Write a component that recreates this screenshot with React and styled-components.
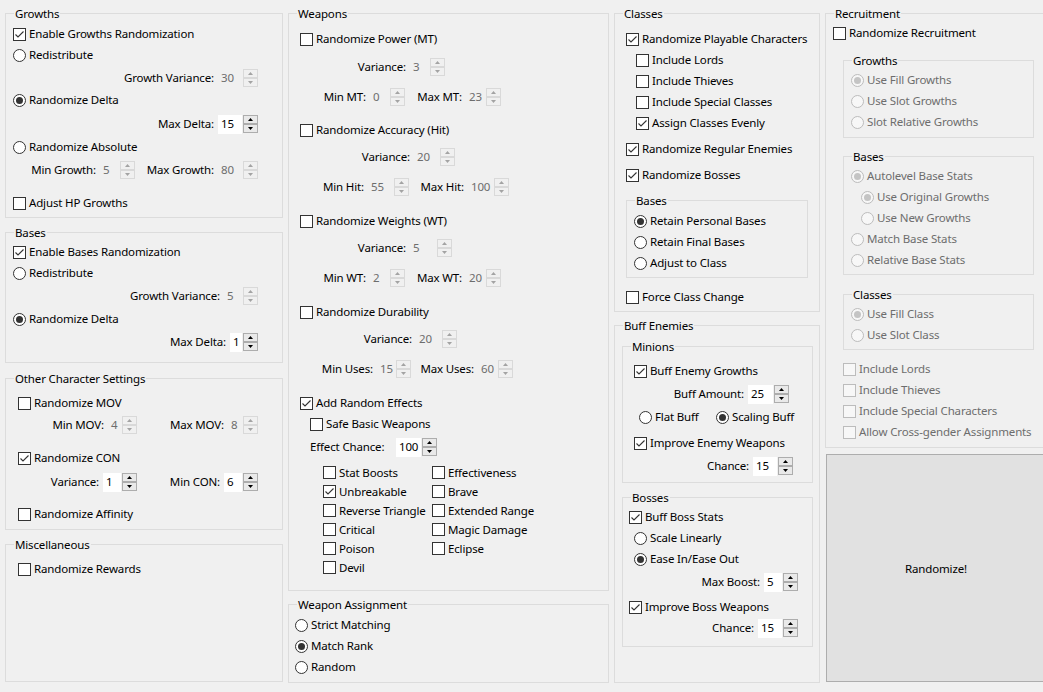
import React from "react";
import styled, { createGlobalStyle } from "styled-components";

const FONT = `"Segoe UI", "Noto Sans", "Open Sans", sans-serif`;

const GlobalStyle = createGlobalStyle`
  html, body {
    margin: 0;
    background: #f0f0f0;
    font-family: ${FONT};
    font-size: 11.5px;
    line-height: 16px;
    letter-spacing: -0.15px;
    color: #000;
  }
`;

const Window = styled.div`
  width: 1043px;
  height: 692px;
  overflow: hidden;
  box-sizing: border-box;
  padding: 13px 0 0 5px;
  display: flex;
  align-items: flex-start;
  gap: 5px;
  background: #f0f0f0;
`;

const Column = styled.div`
  width: ${(p) => p.$w}px;
  flex-shrink: 0;
  display: flex;
  flex-direction: column;
`;

const GroupBox = styled.div`
  position: relative;
  box-sizing: border-box;
  border: 1px solid #dcdcdc;
  height: ${(p) => p.$h}px;
  width: ${(p) => (p.$w ? `${p.$w}px` : "auto")};
  margin-top: ${(p) => p.$mt || 0}px;
  margin-left: ${(p) => p.$ml || 0}px;
`;

const Title = styled.span`
  position: absolute;
  top: -8px;
  left: 8px;
  padding: 0 1px;
  line-height: 16px;
  background: #f0f0f0;
  white-space: nowrap;
`;

const Row = styled.div`
  display: flex;
  align-items: center;
  box-sizing: border-box;
  height: ${(p) => p.$h || 21}px;
  margin-top: ${(p) => p.$mt || 0}px;
  padding-left: ${(p) => p.$pl || 0}px;
  padding-bottom: 1px;
`;

const Opt = styled.span`
  display: inline-flex;
  align-items: center;
  gap: 3px;
  white-space: nowrap;
  color: ${(p) => (p.$off ? "#6d6d6d" : "#000")};
  width: ${(p) => (p.$w ? `${p.$w}px` : "auto")};
  flex-shrink: 0;
`;

const Box = styled.span`
  width: 13px;
  height: 13px;
  box-sizing: border-box;
  border: 1px solid ${(p) => (p.$off ? "#bcbcbc" : "#333")};
  background: ${(p) => (p.$off ? "#f7f7f7" : "#fff")};
  display: inline-flex;
  align-items: center;
  justify-content: center;
  flex-shrink: 0;
`;

const Circle = styled(Box)`
  border-radius: 50%;
  &::after {
    content: "";
    display: ${(p) => (p.$on ? "block" : "none")};
    width: 7px;
    height: 7px;
    border-radius: 50%;
    background: ${(p) => (p.$off ? "#c4c4c4" : "#333")};
  }
`;

const Pair = styled.div`
  display: flex;
  align-items: center;
  flex-shrink: 0;
`;

const PLabel = styled.span`
  width: ${(p) => p.$w}px;
  margin-right: 4px;
  text-align: ${(p) => (p.$left ? "left" : "right")};
  white-space: nowrap;
  flex-shrink: 0;
`;

const Field = styled.span`
  box-sizing: border-box;
  width: ${(p) => p.$w}px;
  height: 19px;
  padding: 0 0 0 3px;
  line-height: 17px;
  background: ${(p) => (p.$on ? "#fff" : "transparent")};
  color: ${(p) => (p.$on ? "#000" : "#6d6d6d")};
  white-space: nowrap;
`;

const Arrows = styled.span`
  margin-left: 1px;
  width: 15px;
  height: 18px;
  display: flex;
  flex-direction: column;
`;

const SpinBtn = styled.span`
  flex: 1;
  box-sizing: border-box;
  border: 1px solid ${(p) => (p.$on ? "#adadad" : "#d9d9d9")};
  background: ${(p) => (p.$on ? "#e9e9e9" : "#f0f0f0")};
  display: flex;
  align-items: center;
  justify-content: center;
`;

const EffectGrid = styled.div`
  display: grid;
  grid-template-columns: 109px auto;
  grid-template-rows: repeat(6, 19px);
  grid-auto-flow: column;
  align-items: center;
  margin-top: 5px;
  padding-left: 34px;
`;

const RandomizeButton = styled.button`
  margin: 6px 0 0 1px;
  width: 220px;
  height: 228px;
  box-sizing: border-box;
  border: 1px solid #adadad;
  background: #e1e1e1;
  font-family: ${FONT};
  font-size: 11.5px;
  letter-spacing: -0.15px;
  color: #000;
  padding: 0;
  text-align: center;
`;

function Group({ title, h, w, mt, ml, children }) {
  return (
    <GroupBox $h={h} $w={w} $mt={mt} $ml={ml}>
      <Title>{title}</Title>
      {children}
    </GroupBox>
  );
}

function Check({ label, checked, off }) {
  return (
    <Opt $off={off}>
      <Box $off={off}>
        {checked && (
          <svg width="11" height="11" viewBox="0 0 11 11">
            <path d="M1.5 5.5 L4 8 L9.5 2.5" fill="none" stroke={off ? "#bcbcbc" : "#333"} strokeWidth="1.1" />
          </svg>
        )}
      </Box>
      {label}
    </Opt>
  );
}

function Radio({ label, checked, off, w }) {
  return (
    <Opt $off={off} $w={w}>
      <Circle $off={off} $on={checked} />
      {label}
    </Opt>
  );
}

function Tri({ up, on }) {
  return (
    <svg width="5" height="3" viewBox="0 0 5 3">
      <path d={up ? "M0 3 L2.5 0 L5 3Z" : "M0 0 L2.5 3 L5 0Z"} fill={on ? "#000" : "#a3a3a3"} />
    </svg>
  );
}

function Spin({ label, lw, fw, value, on, left }) {
  return (
    <Pair>
      <PLabel $w={lw} $left={left}>{label}</PLabel>
      <Field $w={fw} $on={on}>{value}</Field>
      <Arrows>
        <SpinBtn $on={on}><Tri up on={on} /></SpinBtn>
        <SpinBtn $on={on}><Tri on={on} /></SpinBtn>
      </Arrows>
    </Pair>
  );
}

function CharacterColumn() {
  return (
    <Column $w={278}>
      <Group title="Growths" h={205}>
        <Row $mt={10} $pl={7}><Check label="Enable Growths Randomization" checked /></Row>
        <Row $pl={7}><Radio label="Redistribute" /></Row>
        <Row $mt={2}><Spin label="Growth Variance:" lw={208} fw={24} value="30" /></Row>
        <Row $mt={1} $pl={7}><Radio label="Randomize Delta" checked /></Row>
        <Row $mt={3}><Spin label="Max Delta:" lw={208} fw={24} value="15" on /></Row>
        <Row $mt={2} $pl={7}><Radio label="Randomize Absolute" /></Row>
        <Row $mt={2}>
          <Spin label="Min Growth:" lw={90} fw={19} value="5" />
          <Spin label="Max Growth:" lw={79} fw={24} value="80" />
        </Row>
        <Row $mt={12} $pl={7}><Check label="Adjust HP Growths" /></Row>
      </Group>
      <Group title="Bases" h={131} mt={14}>
        <Row $mt={9} $pl={7}><Check label="Enable Bases Randomization" checked /></Row>
        <Row $pl={7}><Radio label="Redistribute" /></Row>
        <Row $mt={2}><Spin label="Growth Variance:" lw={214} fw={18} value="5" /></Row>
        <Row $mt={2} $pl={7}><Radio label="Randomize Delta" checked /></Row>
        <Row $mt={2}><Spin label="Max Delta:" lw={220} fw={12} value="1" on /></Row>
      </Group>
      <Group title="Other Character Settings" h={152} mt={15}>
        <Row $mt={14} $pl={12}><Check label="Randomize MOV" /></Row>
        <Row $mt={1}>
          <Spin label="Min MOV:" lw={98} fw={13} value="4" />
          <Spin label="Max MOV:" lw={87} fw={14} value="8" />
        </Row>
        <Row $mt={12} $pl={12}><Check label="Randomize CON" checked /></Row>
        <Row $mt={3}>
          <Spin label="Variance:" lw={93} fw={18} value="1" on />
          <Spin label="Min CON:" lw={83} fw={18} value="6" on />
        </Row>
        <Row $mt={11} $pl={12}><Check label="Randomize Affinity" /></Row>
      </Group>
      <Group title="Miscellaneous" h={138} mt={14}>
        <Row $mt={14} $pl={12}><Check label="Randomize Rewards" /></Row>
      </Group>
    </Column>
  );
}

const effects = [
  ["Stat Boosts", false],
  ["Unbreakable", true],
  ["Reverse Triangle", false],
  ["Critical", false],
  ["Poison", false],
  ["Devil", false],
  ["Effectiveness", false],
  ["Brave", false],
  ["Extended Range", false],
  ["Magic Damage", false],
  ["Eclipse", false],
];

function WeaponColumn() {
  return (
    <Column $w={321}>
      <Group title="Weapons" h={578}>
        <Row $mt={15} $pl={11}><Check label="Randomize Power (MT)" /></Row>
        <Row $mt={7}><Spin label="Variance:" lw={117} fw={19} value="3" /></Row>
        <Row $mt={9}>
          <Spin label="Min MT:" lw={77} fw={19} value="0" />
          <Spin label="Max MT:" lw={57} fw={19} value="23" />
        </Row>
        <Row $mt={12} $pl={11}><Check label="Randomize Accuracy (Hit)" /></Row>
        <Row $mt={6}><Spin label="Variance:" lw={121} fw={25} value="20" /></Row>
        <Row $mt={9}>
          <Spin label="Min Hit:" lw={75} fw={25} value="55" />
          <Spin label="Max Hit:" lw={55} fw={25} value="100" />
        </Row>
        <Row $mt={13} $pl={11}><Check label="Randomize Weights (WT)" /></Row>
        <Row $mt={6}><Spin label="Variance:" lw={117} fw={26} value="5" /></Row>
        <Row $mt={9}>
          <Spin label="Min WT:" lw={77} fw={19} value="2" />
          <Spin label="Max WT:" lw={57} fw={19} value="20" />
        </Row>
        <Row $mt={13} $pl={11}><Check label="Randomize Durability" /></Row>
        <Row $mt={6}><Spin label="Variance:" lw={123} fw={25} value="20" /></Row>
        <Row $mt={9}>
          <Spin label="Min Uses:" lw={84} fw={18} value="15" />
          <Spin label="Max Uses:" lw={63} fw={19} value="60" />
        </Row>
        <Row $mt={13} $pl={11}><Check label="Add Random Effects" checked /></Row>
        <Row $pl={21}><Check label="Safe Basic Weapons" /></Row>
        <Row $mt={2} $pl={21}><Spin label="Effect Chance:" lw={82} fw={25} value="100" on left /></Row>
        <EffectGrid>
          {effects.map(([name, on]) => (
            <Check key={name} label={name} checked={on} />
          ))}
        </EffectGrid>
      </Group>
      <Group title="Weapon Assignment" h={79} mt={13}>
        <Row $mt={10} $pl={6}><Radio label="Strict Matching" /></Row>
        <Row $pl={6}><Radio label="Match Rank" checked /></Row>
        <Row $pl={6}><Radio label="Random" /></Row>
      </Group>
    </Column>
  );
}

function ClassColumn() {
  return (
    <Column $w={206}>
      <Group title="Classes" h={299}>
        <Row $mt={15} $pl={11}><Check label="Randomize Playable Characters" checked /></Row>
        <Row $pl={21}><Check label="Include Lords" /></Row>
        <Row $pl={21}><Check label="Include Thieves" /></Row>
        <Row $pl={21}><Check label="Include Special Classes" /></Row>
        <Row $pl={21}><Check label="Assign Classes Evenly" checked /></Row>
        <Row $mt={5} $pl={11}><Check label="Randomize Regular Enemies" checked /></Row>
        <Row $mt={5} $pl={11}><Check label="Randomize Bosses" checked /></Row>
        <Group title="Bases" h={78} w={182} mt={14} ml={11}>
          <Row $mt={10} $pl={7}><Radio label="Retain Personal Bases" checked /></Row>
          <Row $pl={7}><Radio label="Retain Final Bases" /></Row>
          <Row $pl={7}><Radio label="Adjust to Class" /></Row>
        </Group>
        <Row $mt={9} $pl={11}><Check label="Force Class Change" /></Row>
      </Group>
      <Group title="Buff Enemies" h={358} mt={13}>
        <Group title="Minions" h={137} w={191} mt={20} ml={7}>
          <Row $mt={14} $pl={11}><Check label="Buff Enemy Growths" checked /></Row>
          <Row $mt={2}><Spin label="Buff Amount:" lw={121} fw={25} value="25" on /></Row>
          <Row $mt={2} $pl={16}>
            <Radio label="Flat Buff" w={77} />
            <Radio label="Scaling Buff" checked />
          </Row>
          <Row $mt={5} $pl={11}><Check label="Improve Enemy Weapons" checked /></Row>
          <Row $mt={2}><Spin label="Chance:" lw={126} fw={24} value="15" on /></Row>
        </Group>
        <Group title="Bosses" h={150} w={191} mt={14} ml={7}>
          <Row $mt={9} $pl={6}><Check label="Buff Boss Stats" checked /></Row>
          <Row $pl={11}><Radio label="Scale Linearly" /></Row>
          <Row $pl={11}><Radio label="Ease In/Ease Out" checked /></Row>
          <Row $mt={2}><Spin label="Max Boost:" lw={137} fw={18} value="5" on /></Row>
          <Row $mt={4} $pl={6}><Check label="Improve Boss Weapons" checked /></Row>
          <Row><Spin label="Chance:" lw={131} fw={24} value="15" on /></Row>
        </Group>
      </Group>
    </Column>
  );
}

function RecruitmentColumn() {
  return (
    <Column $w={226}>
      <Group title="Recruitment" h={435}>
        <Row $mt={9} $pl={7}><Check label="Randomize Recruitment" /></Row>
        <Group title="Growths" h={78} w={191} mt={16} ml={17}>
          <Row $mt={9} $pl={7}><Radio label="Use Fill Growths" checked off /></Row>
          <Row $pl={7}><Radio label="Use Slot Growths" off /></Row>
          <Row $pl={7}><Radio label="Slot Relative Growths" off /></Row>
        </Group>
        <Group title="Bases" h={119} w={191} mt={18} ml={17}>
          <Row $mt={9} $pl={7}><Radio label="Autolevel Base Stats" checked off /></Row>
          <Row $pl={17}><Radio label="Use Original Growths" checked off /></Row>
          <Row $pl={17}><Radio label="Use New Growths" off /></Row>
          <Row $pl={7}><Radio label="Match Base Stats" off /></Row>
          <Row $pl={7}><Radio label="Relative Base Stats" off /></Row>
        </Group>
        <Group title="Classes" h={56} w={191} mt={19} ml={17}>
          <Row $mt={9} $pl={7}><Radio label="Use Fill Class" checked off /></Row>
          <Row $pl={7}><Radio label="Use Slot Class" off /></Row>
        </Group>
        <Row $mt={9} $pl={17}><Check label="Include Lords" off /></Row>
        <Row $pl={17}><Check label="Include Thieves" off /></Row>
        <Row $pl={17}><Check label="Include Special Characters" off /></Row>
        <Row $pl={17}><Check label="Allow Cross-gender Assignments" off /></Row>
      </Group>
      <RandomizeButton>Randomize!</RandomizeButton>
    </Column>
  );
}

export default function App() {
  return (
    <>
      <GlobalStyle />
      <Window>
        <CharacterColumn />
        <WeaponColumn />
        <ClassColumn />
        <RecruitmentColumn />
      </Window>
    </>
  );
}
